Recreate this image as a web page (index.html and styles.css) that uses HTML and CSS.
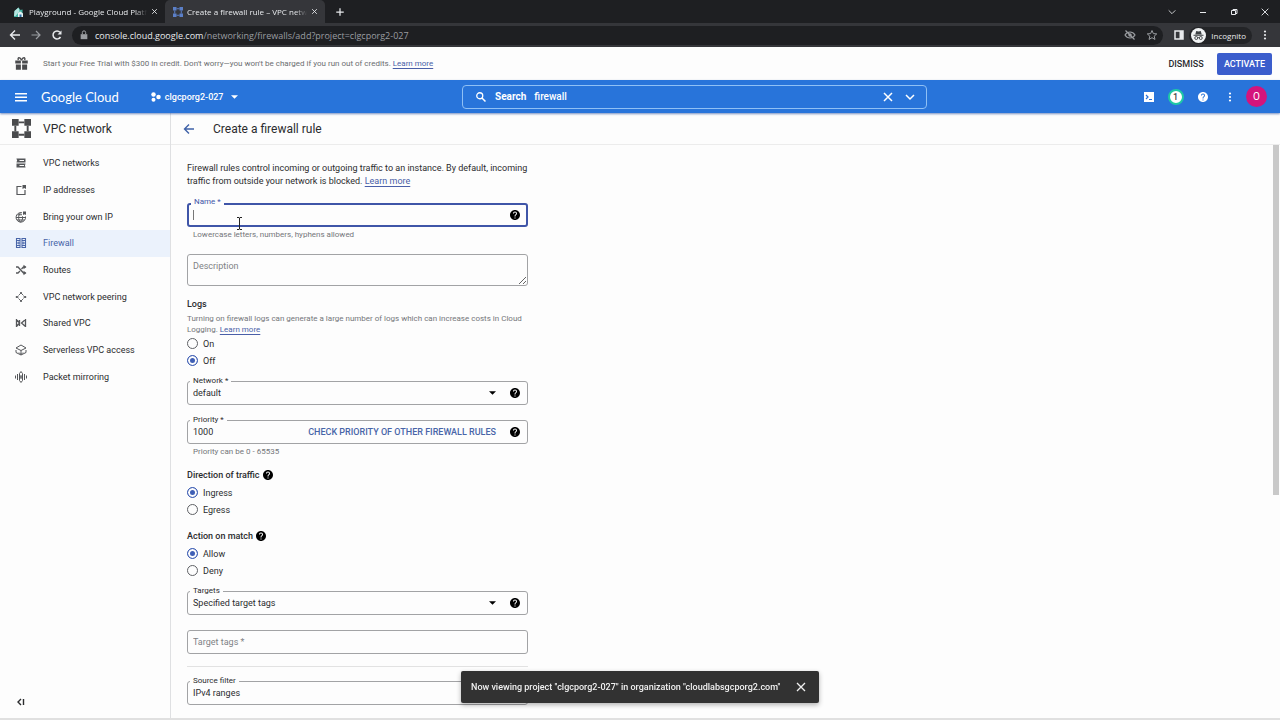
FILE: index.html
```
<!DOCTYPE html>
<html lang="en">
<head>
    <meta charset="UTF-8">
    <meta name="viewport" content="width=device-width, initial-scale=1.0">
    <title>Create a firewall rule – VPC network</title>
    <link rel="stylesheet" href="styles.css">
</head>
<body>
    <!-- Shared icons -->
    <svg class="sprite" aria-hidden="true">
        <symbol id="help" viewBox="0 0 24 24"><path d="M12 2C6.48 2 2 6.48 2 12s4.48 10 10 10 10-4.48 10-10S17.52 2 12 2zm1 17h-2v-2h2v2zm2.07-7.75l-.9.92C13.45 12.9 13 13.5 13 15h-2v-.5c0-1.1.45-2.1 1.17-2.83l1.24-1.26c.37-.36.59-.86.59-1.41 0-1.1-.9-2-2-2s-2 .9-2 2H8c0-2.21 1.79-4 4-4s4 1.79 4 4c0 .88-.36 1.68-.93 2.25z"/></symbol>
        <symbol id="close" viewBox="0 0 24 24"><path d="M4 4l16 16M20 4L4 20" fill="none" stroke="currentColor" stroke-width="3"/></symbol>
        <symbol id="back" viewBox="0 0 24 24"><path d="M22 12H3M12 3l-9 9 9 9" fill="none" stroke="currentColor" stroke-width="2.8"/></symbol>
        <symbol id="more" viewBox="0 0 24 24"><circle cx="12" cy="5" r="2.2"/><circle cx="12" cy="12" r="2.2"/><circle cx="12" cy="19" r="2.2"/></symbol>
        <symbol id="chevron" viewBox="0 0 24 24"><path d="M4 8l8 8 8-8" fill="none" stroke="currentColor" stroke-width="3"/></symbol>
        <symbol id="caret" viewBox="0 0 8 4"><path d="M0 0h8L4 4z"/></symbol>
        <symbol id="vpc" viewBox="0 0 20 20"><path d="M0 0h7v7H0zM13 0h7v7h-7zM0 13h7v7H0zM13 13h7v7h-7z"/><path d="M7 3.5h6M7 16.5h6M3.5 7v6M16.5 7v6" fill="none" stroke="currentColor" stroke-width="2"/></symbol>
    </svg>

    <!-- Browser window -->
    <div class="tab-strip">
        <div class="tab">
            <svg class="icon-12" viewBox="0 0 24 24"><path d="M3 10l8-7 4 5 4-1v15H2z" fill="#43b5a5"/><path d="M3 10l8-7 2 8-8 9H2z" fill="#b5e4df"/><path d="M10 22v-8l5-3 5 4v7z" fill="#e4f1f0"/><path d="M13 22v-5h4v5z" fill="#2a6fa8"/></svg>
            <span class="tab-title">Playground - Google Cloud Platform</span>
            <button class="icon-button" aria-label="Close tab"><svg class="icon-7"><use href="#close"/></svg></button>
        </div>
        <div class="tab tab-active">
            <svg class="icon-10 tab-vpc"><use href="#vpc"/></svg>
            <span class="tab-title">Create a firewall rule – VPC network</span>
            <button class="icon-button" aria-label="Close tab"><svg class="icon-7"><use href="#close"/></svg></button>
        </div>
        <button class="icon-button new-tab" aria-label="New tab"><svg class="icon-10" viewBox="0 0 24 24"><path d="M12 3v18M3 12h18" fill="none" stroke="currentColor" stroke-width="3"/></svg></button>
        <div class="window-buttons">
            <button class="icon-button" aria-label="Search tabs"><svg class="icon-10" viewBox="0 0 24 24"><path d="M4 8l8 8 8-8" fill="none" stroke="currentColor" stroke-width="2"/></svg></button>
            <button class="icon-button" aria-label="Minimize"><svg class="icon-10" viewBox="0 0 10 10"><path d="M2 5.5h6" fill="none" stroke="currentColor"/></svg></button>
            <button class="icon-button" aria-label="Restore"><svg class="icon-10" viewBox="0 0 10 10"><path d="M2.5 3.5h4v4h-4zM4 3.5v-1h4v4H7" fill="none" stroke="currentColor"/></svg></button>
            <button class="icon-button" aria-label="Close"><svg class="icon-10" viewBox="0 0 24 24"><path d="M4 4l16 16M20 4L4 20" fill="none" stroke="currentColor" stroke-width="2.2"/></svg></button>
        </div>
    </div>

    <div class="toolbar">
        <button class="icon-button" aria-label="Back"><svg class="icon-12"><use href="#back"/></svg></button>
        <button class="icon-button forward" aria-label="Forward"><svg class="icon-12" viewBox="0 0 24 24"><path d="M3 12h17M12 4l8 8-8 8" fill="none" stroke="currentColor" stroke-width="2.4"/></svg></button>
        <button class="icon-button" aria-label="Reload"><svg class="icon-12" viewBox="0 0 24 24"><path d="M19 16a8 8 0 1 1-1-9.5" fill="none" stroke="currentColor" stroke-width="3"/><path d="M21 3v8h-8z"/></svg></button>
        <div class="omnibox">
            <svg class="icon-10 muted" viewBox="0 0 24 24"><path d="M4 10h16v12H4z"/><path d="M8 10V6a4 4 0 0 1 8 0v4" fill="none" stroke="currentColor" stroke-width="2.4"/></svg>
            <span class="url"><b>console.cloud.google.com</b>/networking/firewalls/add?project=clgcporg2-027</span>
            <svg class="icon-12 muted" viewBox="0 0 24 24"><path d="M2 12c5-8 15-8 20 0-5 8-15 8-20 0z" fill="none" stroke="currentColor" stroke-width="2.4"/><circle cx="12" cy="12" r="3.5"/><path d="M3 3l18 18" stroke="currentColor" stroke-width="2.4"/></svg>
            <svg class="icon-12 muted" viewBox="0 0 24 24"><path d="M12 3l2.7 6.2 6.8.6-5.1 4.5 1.5 6.6-5.9-3.5-5.9 3.5 1.5-6.6-5.1-4.5 6.8-.6z" fill="none" stroke="currentColor" stroke-width="2"/></svg>
        </div>
        <button class="icon-button" aria-label="Side panel"><svg class="icon-12" viewBox="0 0 12 12"><path d="M2 2h8v8H2z" fill="none" stroke="currentColor" stroke-width="1.5"/><path d="M6.5 2H10v8H6.5z"/></svg></button>
        <div class="incognito">
            <svg class="icon-15" viewBox="0 0 30 30"><circle cx="15" cy="15" r="15" fill="#f1f3f4"/><path d="M10.5 6l4.5 1 4.5-1 2 7h-13z" fill="#3c4043"/><path d="M5 14.5h20" stroke="#3c4043" stroke-width="2"/><g fill="none" stroke="#3c4043" stroke-width="1.8"><circle cx="10.5" cy="20" r="3"/><circle cx="19.5" cy="20" r="3"/><path d="M13.5 19.5q1.5-1 3 0"/></g></svg>
            <span>Incognito</span>
        </div>
        <button class="icon-button" aria-label="Menu"><svg class="icon-12"><use href="#more"/></svg></button>
    </div>

    <!-- Free trial bar -->
    <div class="promo">
        <svg class="icon-15" viewBox="0 0 24 24"><path d="M2 7h9v5H2zM13 7h9v5h-9zM3 13.5h8V22H3zM13 13.5h8V22h-8z"/><path d="M12 7C10 1 5 2 7 6.5M12 7c2-6 7-5 5-.5" fill="none" stroke="currentColor" stroke-width="2.2"/></svg>
        <p class="promo-text">Start your Free Trial with $300 in credit. Don't worry—you won't be charged if you run out of credits. <a href="#">Learn more</a></p>
        <button class="promo-dismiss">DISMISS</button>
        <button class="promo-activate">ACTIVATE</button>
    </div>

    <header class="header">
        <div class="header-left">
            <button class="icon-button" aria-label="Navigation menu"><svg class="icon-12" viewBox="0 0 12 12"><path d="M0 2h12v1.5H0zM0 5.5h12V7H0zM0 9h12v1.5H0z"/></svg></button>
            <a class="logo" href="#">Google Cloud</a>
            <button class="project">
                <svg class="icon-10" viewBox="0 0 20 20"><circle cx="5" cy="5" r="4.5"/><circle cx="5" cy="15.5" r="4"/><circle cx="15" cy="10" r="4.5"/></svg>
                clgcporg2-027
                <svg class="caret"><use href="#caret"/></svg>
            </button>
        </div>
        <div class="search">
            <svg class="icon-12" viewBox="0 0 24 24"><circle cx="9.5" cy="9.5" r="6" fill="none" stroke="currentColor" stroke-width="2.6"/><path d="M14 14l7 7" stroke="currentColor" stroke-width="3"/></svg>
            <label for="search">Search</label>
            <input id="search" type="text" value="firewall">
            <button class="icon-button" aria-label="Clear"><svg class="icon-12"><use href="#close"/></svg></button>
            <button class="icon-button" aria-label="Expand"><svg class="icon-12"><use href="#chevron"/></svg></button>
        </div>
        <div class="header-right">
            <button class="icon-button" aria-label="Cloud Shell"><svg class="icon-12" viewBox="0 0 24 24"><path d="M2 2h20v20H2z"/><path d="M6 8l4 4-4 4M12 17h6" fill="none" stroke="#2a72d8" stroke-width="2.4"/></svg></button>
            <button class="icon-button"><span class="badge">1</span></button>
            <button class="icon-button" aria-label="Help"><svg class="icon-12"><use href="#help"/></svg></button>
            <button class="icon-button" aria-label="More"><svg class="icon-12"><use href="#more"/></svg></button>
            <button class="icon-button"><span class="avatar">O</span></button>
        </div>
    </header>

    <div class="page">
        <nav class="sidebar">
            <div class="sidebar-title">
                <svg class="icon-19"><use href="#vpc"/></svg>
                <h2>VPC network</h2>
            </div>
            <ul class="menu">
                <li><a href="#"><svg class="icon-12" viewBox="0 0 24 24"><path d="M3 3h18v8H3zM3 13h18v8H3z"/><path d="M9 7h9M9 17h9M3 5v4M21 15v4" stroke="#fdfdfd" stroke-width="2.2"/></svg>VPC networks</a></li>
                <li><a href="#"><svg class="icon-12" viewBox="0 0 24 24"><path d="M13 5H4v16h16v-9" fill="none" stroke="currentColor" stroke-width="2.4"/><path d="M15 2h7v8l-3.5-2L15 10z"/></svg>IP addresses</a></li>
                <li><a href="#"><svg class="icon-12" viewBox="0 0 24 24"><g fill="none" stroke="currentColor" stroke-width="2"><path d="M14 3.5A9.5 9.5 0 1 0 21 11M2 13h19M5 7.5h9M4 18h15M11 3.5c-5 5-5 14 0 19 4-4 5-9 4-12"/></g><path d="M16 1h6v7l-3-1.5L16 8z"/></svg>Bring your own IP</a></li>
                <li><a class="current" href="#"><svg class="icon-12" viewBox="0 0 24 24"><path d="M3 3h7v4H3zM14 3h7v4h-7zM8 10h8v4H8zM3 17h7v4H3zM14 17h7v4h-7zM3 7v10M21 7v10M3 12h5M16 12h5" fill="none" stroke="currentColor" stroke-width="2.2"/></svg>Firewall</a></li>
                <li><a href="#"><svg class="icon-12" viewBox="0 0 24 24"><path d="M2 6h4l11 12h4M2 18h4l4-4M13 10l4-4h4" fill="none" stroke="currentColor" stroke-width="2.6"/><path d="M17 1.5l6 4.5-6 4.5zM17 13.5l6 4.5-6 4.5z"/></svg>Routes</a></li>
                <li><a href="#"><svg class="icon-12" viewBox="0 0 24 24"><path d="M8 8l3-3h2l3 3M8 16l3 3h2l3-3M7 9l-2 3 2 3M17 9l2 3-2 3" fill="none" stroke="currentColor" stroke-width="1.8"/><circle cx="12" cy="4" r="2.2"/><circle cx="12" cy="20" r="2.2"/><circle cx="3.5" cy="12" r="2.2"/><circle cx="20.5" cy="12" r="2.2"/></svg>VPC network peering</a></li>
                <li><a href="#"><svg class="icon-12" viewBox="0 0 24 24"><path d="M3 4v16M21 4v16M3 5l6 7-6 7M21 5l-8 7 8 7M9 6v12" fill="none" stroke="currentColor" stroke-width="2.6"/></svg>Shared VPC</a></li>
                <li><a href="#"><svg class="icon-12" viewBox="0 0 24 24"><path d="M12 2l10 6-10 5L2 8zM2 12v5l10 5 10-5v-5M12 13v8M8 17l4 4 4-4" fill="none" stroke="currentColor" stroke-width="2"/></svg>Serverless VPC access</a></li>
                <li><a href="#"><svg class="icon-12" viewBox="0 0 24 24"><path d="M1 9v6M5 6v12M19 6v12M23 9v6M9 5v14M15 5v14M9 5l3-4 3 4M9 19l3 4 3-4M12 8v2M12 14v2" fill="none" stroke="currentColor" stroke-width="2"/><circle cx="12" cy="12" r="2"/></svg>Packet mirroring</a></li>
            </ul>
            <button class="icon-button collapse" aria-label="Hide menu"><svg class="icon-10" viewBox="0 0 10 10"><path d="M5 2L2 5l3 3M7.5 2v6" fill="none" stroke="currentColor" stroke-width="1.4"/></svg></button>
        </nav>

        <main class="main">
            <div class="main-title">
                <button class="icon-button back" aria-label="Back"><svg class="icon-12"><use href="#back"/></svg></button>
                <h1>Create a firewall rule</h1>
            </div>
            <div class="content">
                <form class="form">
                    <p class="intro">Firewall rules control incoming or outgoing traffic to an instance. By default, incoming traffic from outside your network is blocked. <a href="#">Learn more</a></p>

                    <div class="field field-focus">
                        <label for="name">Name *</label>
                        <span class="text-caret"></span>
                        <input id="name" type="text">
                        <svg class="icon-12"><use href="#help"/></svg>
                        <svg class="pointer" viewBox="0 0 7 13"><path d="M1 .5h2l.5.5.5-.5h2M1 12.5h2l.5-.5.5.5h2M3.5 1v11" fill="none" stroke="#222"/></svg>
                    </div>
                    <p class="hint">Lowercase letters, numbers, hyphens allowed</p>

                    <textarea class="description" placeholder="Description" aria-label="Description"></textarea>

                    <h3>Logs</h3>
                    <p class="note">Turning on firewall logs can generate a large number of logs which can increase costs in Cloud Logging. <a href="#">Learn more</a></p>
                    <div class="radios">
                        <label><input type="radio" name="logs">On</label>
                        <label><input type="radio" name="logs" checked>Off</label>
                    </div>

                    <div class="field">
                        <label for="network">Network *</label>
                        <select id="network"><option>default</option></select>
                        <svg class="caret"><use href="#caret"/></svg>
                        <svg class="icon-12"><use href="#help"/></svg>
                    </div>

                    <div class="field field-next">
                        <label for="priority">Priority *</label>
                        <input id="priority" type="text" value="1000">
                        <button type="button" class="check">CHECK PRIORITY OF OTHER FIREWALL RULES</button>
                        <svg class="icon-12"><use href="#help"/></svg>
                    </div>
                    <p class="hint">Priority can be 0 - 65535</p>

                    <h3>Direction of traffic <svg class="icon-12"><use href="#help"/></svg></h3>
                    <div class="radios">
                        <label><input type="radio" name="direction" checked>Ingress</label>
                        <label><input type="radio" name="direction">Egress</label>
                    </div>

                    <h3>Action on match <svg class="icon-12"><use href="#help"/></svg></h3>
                    <div class="radios">
                        <label><input type="radio" name="action" checked>Allow</label>
                        <label><input type="radio" name="action">Deny</label>
                    </div>

                    <div class="field">
                        <label for="targets">Targets</label>
                        <select id="targets"><option>Specified target tags</option></select>
                        <svg class="caret"><use href="#caret"/></svg>
                        <svg class="icon-12"><use href="#help"/></svg>
                    </div>

                    <div class="field field-next">
                        <input type="text" placeholder="Target tags *" aria-label="Target tags">
                    </div>

                    <hr>

                    <div class="field">
                        <label for="source">Source filter</label>
                        <select id="source"><option>IPv4 ranges</option></select>
                        <svg class="caret"><use href="#caret"/></svg>
                        <svg class="icon-12"><use href="#help"/></svg>
                    </div>
                </form>
                <div class="scrollbar"></div>
            </div>
        </main>
    </div>

    <div class="snackbar">
        <span>Now viewing project "clgcporg2-027" in organization "cloudlabsgcporg2.com"</span>
        <button class="icon-button" aria-label="Close"><svg class="icon-12" viewBox="0 0 24 24"><path d="M4 4l16 16M20 4L4 20" fill="none" stroke="currentColor" stroke-width="2.6"/></svg></button>
    </div>
</body>
</html>
```
FILE: styles.css
```
* {
    box-sizing: border-box;
}

body {
    display: flex;
    flex-direction: column;
    height: 100vh;
    margin: 0;
    overflow: hidden;
    background-color: #fdfdfd;
    border-bottom: 2px solid #e0e0e0;
    font-family: Roboto, Arial, sans-serif;
    font-size: 9px;
    color: #2b2c2e;
}

h1, h2, h3, p, ul {
    margin: 0;
    padding: 0;
    font-weight: 400;
}

button, input, select, textarea {
    margin: 0;
    padding: 0;
    border: none;
    outline: none;
    background: none;
    font: inherit;
    color: inherit;
}

input, select {
    min-width: 0;
}

a {
    color: #4a5fa8;
    text-underline-offset: 2px;
}

svg {
    flex: none;
    fill: currentColor;
}

.sprite {
    display: none;
}

.icon-7 {
    width: 7px;
    height: 7px;
}

.icon-10 {
    width: 10px;
    height: 10px;
}

.icon-12 {
    width: 12px;
    height: 12px;
}

.icon-15 {
    width: 15px;
    height: 15px;
}

.icon-19 {
    width: 19px;
    height: 19px;
}

.caret {
    width: 7px;
    height: 4px;
}

.icon-button {
    display: flex;
    flex: none;
    align-items: center;
    justify-content: center;
}

/* Browser window */
.tab-strip, .toolbar {
    display: flex;
    flex: none;
    align-items: center;
    color: #e8eaed;
    font-family: "Open Sans", "Segoe UI", sans-serif;
}

.tab-strip {
    height: 23px;
    padding-left: 5px;
    background-color: #1e1f22;
    font-size: 8px;
}

.tab {
    display: flex;
    align-items: center;
    gap: 4px;
    width: 160px;
    height: 23px;
    padding: 0 7px 0 8px;
}

.tab-active {
    background-color: #35363a;
    border-radius: 5px 5px 0 0;
}

.tab-vpc {
    color: #5b7fc7;
}

.tab-title {
    flex: 1;
    overflow: hidden;
    white-space: nowrap;
    -webkit-mask-image: linear-gradient(to right, #000 90%, transparent);
    mask-image: linear-gradient(to right, #000 90%, transparent);
}

.new-tab {
    width: 29px;
}

.window-buttons {
    display: flex;
    margin-left: auto;
    height: 19px;
}

.window-buttons button {
    width: 31px;
}

.toolbar {
    height: 24px;
    padding: 0 9px 0 4px;
    background-color: #35363a;
    font-size: 9px;
}

.toolbar > button {
    width: 21px;
}

.toolbar .forward, .muted {
    color: #9a9da1;
}

.omnibox {
    display: flex;
    flex: 1;
    align-items: center;
    gap: 10px;
    height: 19px;
    margin: 0 5px;
    padding: 0 5px 0 7px;
    background-color: #1e1f22;
    border-radius: 10px;
}

.url {
    flex: 1;
    margin-left: -4px;
    color: #9a9da1;
}

.url b {
    font-weight: 400;
    color: #e8eaed;
}

.incognito {
    display: flex;
    align-items: center;
    gap: 5px;
    height: 17px;
    padding: 0 6px 0 2px;
    background-color: #232427;
    border-radius: 9px;
    font-size: 8px;
}

.toolbar > .incognito + button {
    width: 12px;
    margin-left: 7px;
}

/* Free trial bar */
.promo {
    display: flex;
    flex: none;
    align-items: center;
    height: 33px;
    padding: 0 8px 0 14px;
    color: #4a4b4d;
}

.promo-text {
    flex: 1;
    margin-left: 14px;
    font-size: 8px;
    color: #6b6d70;
}

.promo-dismiss {
    width: 62px;
    font-weight: 500;
    color: #2b2c2e;
}

.promo-activate {
    width: 55px;
    height: 22px;
    background-color: #3b5dcc;
    border-radius: 2px;
    font-weight: 500;
    color: #fff;
}

/* Console header */
.header {
    display: grid;
    grid-template-columns: 462px minmax(0, 465px) 1fr;
    flex: none;
    align-items: center;
    position: relative;
    height: 33px;
    background-color: #2874da;
    box-shadow: 0 1px 2px rgba(30, 70, 150, 0.6);
    color: #fff;
}

.header-left {
    display: flex;
    align-items: center;
    padding-left: 15px;
}

.logo {
    margin-left: 14px;
    font-family: Lato, sans-serif;
    font-size: 13px;
    line-height: 16px;
    color: #fff;
    text-decoration: none;
}

.project {
    display: flex;
    align-items: center;
    gap: 4px;
    margin-left: 32px;
    font-weight: 500;
}

.project .caret {
    margin-left: 3px;
}

.search {
    display: flex;
    align-items: center;
    gap: 8px;
    height: 24px;
    padding: 0 9px 0 12px;
    border: 1px solid #8fc0f5;
    border-radius: 4px;
    font-size: 10px;
}

.search label {
    font-weight: 700;
}

.search input {
    flex: 1;
    font-weight: 500;
}

.search button {
    width: 14px;
}

.header-right {
    display: flex;
    align-items: center;
    justify-content: flex-end;
    padding-right: 10px;
}

.header-right button {
    width: 27px;
}

.badge, .avatar {
    border-radius: 50%;
    text-align: center;
}

.badge {
    width: 16px;
    border: 2px solid #1fc9a5;
    background-color: #fff;
    line-height: 12px;
    font-weight: 500;
    color: #444;
}

.avatar {
    width: 21px;
    background-color: #d4147c;
    line-height: 21px;
    font-size: 10px;
}

/* Page */
.page {
    display: flex;
    flex: 1;
    min-height: 0;
}

.sidebar {
    display: flex;
    flex: none;
    flex-direction: column;
    width: 171px;
    border-right: 1px solid #dfe0e2;
}

.sidebar-title, .main-title {
    display: flex;
    flex: none;
    align-items: center;
    height: 32px;
    border-bottom: 1px solid #ececec;
}

.sidebar-title {
    gap: 12px;
    padding-left: 12px;
    color: #4a4b4d;
}

h1, h2 {
    font-size: 12px;
    line-height: 16px;
    color: #2b2c2e;
}

.menu {
    display: grid;
    grid-auto-rows: 1fr;
    height: 240px;
    margin-top: 5px;
    list-style: none;
}

.menu a {
    display: flex;
    align-items: center;
    gap: 16px;
    height: 100%;
    padding-left: 15px;
    color: #2b2c2e;
    text-decoration: none;
}

.menu svg {
    color: #55575a;
}

.menu .current {
    background-color: #ebf2fc;
}

.menu .current, .menu .current svg {
    color: #4865a8;
}

.collapse {
    width: 42px;
    height: 32px;
    margin-top: auto;
}

.main {
    display: flex;
    flex: 1;
    flex-direction: column;
    min-width: 0;
}

.main-title {
    gap: 18px;
    padding-left: 12px;
}

.back {
    color: #3f62a8;
}

.content {
    display: flex;
    flex: 1;
    justify-content: space-between;
    min-height: 0;
    overflow: hidden;
}

.scrollbar {
    width: 6px;
    height: 350px;
    margin-right: 1px;
    background-color: #c9c9c9;
}

/* Form */
.form {
    flex: 1;
    max-width: 357px;
    padding: 17px 0 0 16px;
}

.intro {
    line-height: 13px;
    margin-bottom: 15px;
}

.field {
    display: flex;
    align-items: center;
    position: relative;
    height: 24px;
    padding: 0 6px 0 5px;
    border: 1px solid #a2a3a5;
    border-radius: 3px;
}

.field-focus {
    padding: 0 5px 0 4px;
    border: 2px solid #3f55a8;
}

.field-next {
    margin-top: 15px;
}

.field label {
    position: absolute;
    top: -6px;
    left: 2px;
    padding: 0 3px;
    background-color: #fdfdfd;
    font-size: 8px;
    line-height: 10px;
}

.field-focus label {
    top: -8px;
    color: #3f55a8;
}

.field input, .field select {
    flex: 1;
    appearance: none;
}

.field .caret {
    margin-right: 13px;
    color: #000;
}

.field .icon-12, h3 .icon-12 {
    color: #000;
}

.text-caret {
    width: 1px;
    height: 10px;
    background-color: #777;
}

.pointer {
    position: absolute;
    top: 12px;
    left: 47px;
    width: 7px;
    height: 13px;
}

.hint, .note {
    font-size: 8px;
    line-height: 11px;
    color: #74767a;
}

.hint {
    margin: 2px 6px 0;
}

::placeholder {
    color: #808285;
    opacity: 1;
}

.description {
    display: block;
    width: 100%;
    height: 32px;
    margin-top: 14px;
    padding: 6px 5px;
    border: 1px solid #a2a3a5;
    border-radius: 3px;
}

h3 {
    display: flex;
    align-items: center;
    gap: 2px;
    margin: 12px 0 3px;
    font-size: 9px;
    font-weight: 500;
    line-height: 12px;
}

.radios {
    margin-bottom: 12px;
}

.radios label {
    display: flex;
    align-items: center;
    gap: 5px;
    height: 17px;
}

.radios input {
    appearance: none;
    width: 11px;
    height: 11px;
    border: 1px solid #5f6165;
    border-radius: 50%;
}

.radios input:checked {
    border-color: #3f5fb5;
    background-color: #3f5fb5;
    box-shadow: inset 0 0 0 2px #fdfdfd;
}

.check {
    margin-right: 13px;
    font-weight: 500;
    color: #4865a8;
}

hr {
    height: 1px;
    margin: 12px 0 14px;
    border: none;
    background-color: #e2e2e2;
}

/* Message at the bottom */
.snackbar {
    display: flex;
    align-items: center;
    justify-content: space-between;
    position: fixed;
    bottom: 17px;
    left: 50%;
    transform: translateX(-50%);
    min-width: 358px;
    height: 32px;
    padding: 0 12px 0 10px;
    background-color: #323232;
    border-radius: 2px;
    box-shadow: 0 2px 5px rgba(0, 0, 0, 0.3);
    white-space: nowrap;
    color: #f1f1f1;
    font-weight: 500;
}
```
